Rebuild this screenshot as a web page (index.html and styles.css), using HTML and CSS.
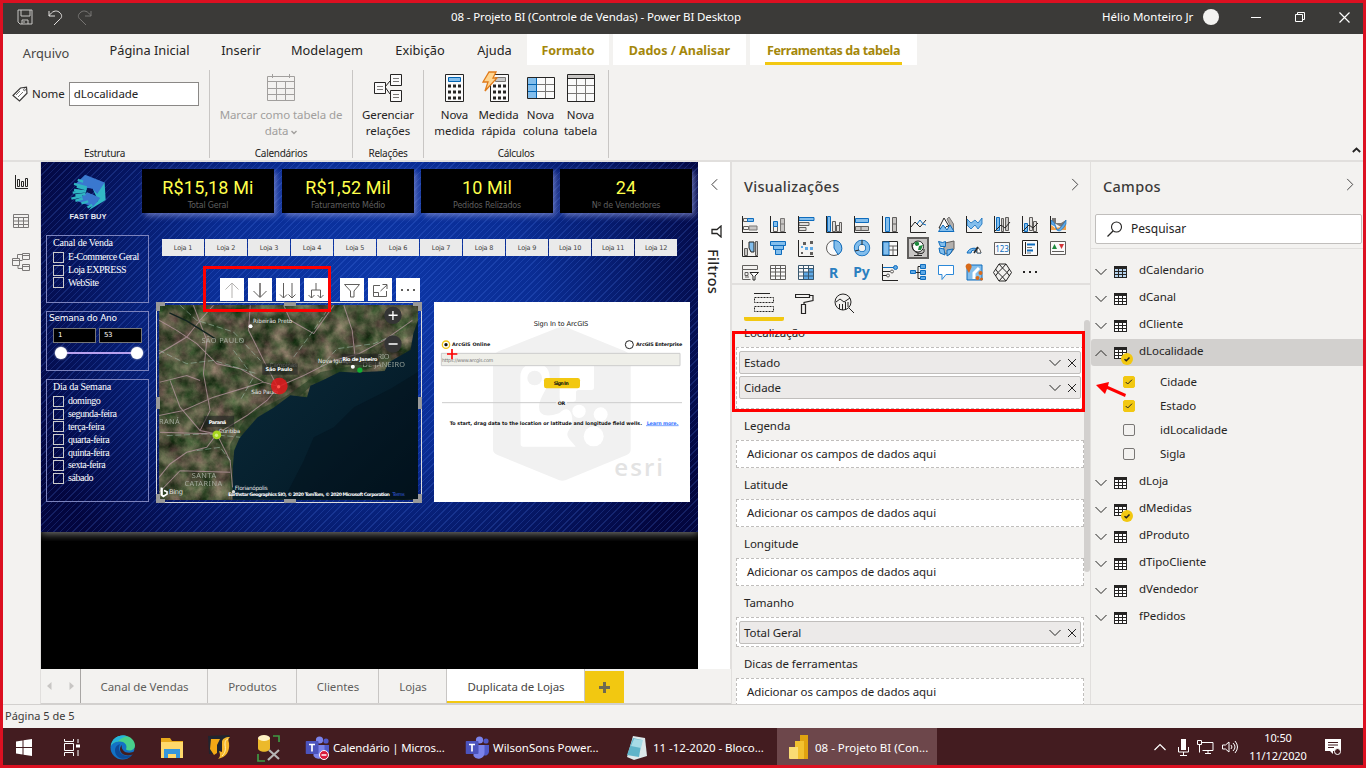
FILE: index.html
```html
<!DOCTYPE html>
<html lang="pt-BR">
<head>
<meta charset="utf-8">
<title>08 - Projeto BI (Controle de Vendas) - Power BI Desktop</title>
<link rel="stylesheet" href="styles.css">
</head>
<body>
<svg class="defs" aria-hidden="true">
  <symbol id="down" viewBox="0 0 12 8"><path d="M.5 1 6 6.500 11.500 1" fill="none" stroke="currentColor"/></symbol>
  <symbol id="close" viewBox="0 0 10 10"><path d="M1 1l8 8M9 1 1 9" fill="none" stroke="currentColor"/></symbol>
  <symbol id="right" viewBox="0 0 8 14"><path d="M1 1l6 6-6 6" fill="none" stroke="currentColor"/></symbol>
  <symbol id="tbl" viewBox="0 0 13 12"><path d="M0 0h13v12H0z" fill="#252423"/><path class="cells" d="M1 3h3v2H1zm4 0h3v2H5zm4 0h3v2H9zM1 6h3v2H1zm4 0h3v2H5zm4 0h3v2H9zM1 9h3v2H1zm4 0h3v2H5zm4 0h3v2H9z" fill="currentColor"/></symbol>
  <symbol id="tick" viewBox="0 0 12 12"><circle cx="6" cy="6" r="6" fill="#f2c811"/><path d="M3.500 6.200l1.800 1.600 3.200-3.400" fill="none" stroke="#252423" stroke-width="1.500"/></symbol>
  <symbol id="teams" viewBox="0 0 24 24"><circle cx="14" cy="4" r="3.600" fill="#7b83eb"/><circle cx="20.500" cy="5" r="2.600" fill="#5059c9"/><path d="M16 9h7.500v7a4 4 0 0 1-6 3z" fill="#5059c9"/><path d="M8 9h11v8a6 6 0 0 1-11 3z" fill="#7b83eb"/><rect y="5" width="13" height="13" rx="1" fill="#4b53bc"/><path d="M3.500 8.500h6M6.500 8.500v7" stroke="#fff" stroke-width="1.700"/></symbol>
</svg>
<div class="app">
  <header class="titlebar">
    <div class="quick">
      <svg width="17" height="16" viewBox="0 0 17 16"><path d="M1 1h14v14H3l-2-2zM4 1v6h9V1M5 15v-4h6v4M7 12v2" fill="none" stroke="#c8c6c4"/></svg>
      <svg width="15" height="15" viewBox="0 0 15 15"><path d="M1 1v5h6M1 6C4 1 8 0 11 2c4 3 3 6 0 8l-5 5" fill="none" stroke="#e1dfdd"/></svg>
      <svg width="15" height="15" viewBox="0 0 15 15"><path d="M14 1v5H8M14 6C11 1 7 0 4 2 0 5 1 8 4 10l5 5" fill="none" stroke="#777573"/></svg>
    </div>
    <div class="title">08 - Projeto BI (Controle de Vendas) - Power BI Desktop</div>
    <div class="user">Hélio Monteiro Jr</div><i class="avatar"></i>
    <div class="wbtns">
      <svg width="10" height="10" viewBox="0 0 10 10"><path d="M0 5.500h10" stroke="#fff"/></svg>
      <svg width="10" height="10" viewBox="0 0 10 10"><path d="M.5 2.500h7v7h-7zM2.500 2V.5h7v7H8" fill="none" stroke="#fff"/></svg>
      <svg width="11" height="11" viewBox="0 0 11 11"><path d="M.5.5l10 10M10.500.5l-10 10" stroke="#fff" stroke-width="1.200"/></svg>
    </div>
  </header>

  <nav class="tabs">
    <span class="tab file">Arquivo</span><span class="tab t2">Página Inicial</span><span class="tab t3">Inserir</span><span class="tab t4">Modelagem</span><span class="tab t5">Exibição</span><span class="tab t6">Ajuda</span>
    <span class="ctx c1">Formato</span><span class="ctx c2">Dados / Analisar</span><span class="ctx c3"><b>Ferramentas da tabela</b></span>
  </nav>

  <section class="ribbon">
    <div class="group g1">
      <div class="namerow">
        <svg width="16" height="17" viewBox="0 0 16 17"><path d="M1 9.500 8.500 2l6-.8.5 6L7.500 15z" fill="#fff" stroke="#3b3a39" stroke-width="1.200"/><path d="M4 9l4-4M6 11l5-5" stroke="#797775"/><circle cx="12.500" cy="3.700" r="1" fill="none" stroke="#3b3a39" stroke-width=".7"/></svg>
        <span>Nome</span><span class="nameinput">dLocalidade</span>
      </div>
      <div class="glabel">Estrutura</div>
    </div>
    <div class="group g2">
      <div class="btn off">
        <svg width="28" height="29" viewBox="0 0 28 29"><path d="M.5 3.500h27v24H.5zM.5 8.500h27M.5 15.500h27M.5 21.500h27M9.500 8.500v19M18.500 8.500v19M5.500 1v4M22.500 1v4" fill="none" stroke="#a19f9d"/></svg>
        <span>Marcar como tabela de<br>data <svg width="6" height="5" viewBox="0 0 6 5"><path d="M.5 1 3 3.500 5.500 1" fill="none" stroke="#a19f9d" stroke-width="1.400"/></svg></span>
      </div>
      <div class="glabel">Calendários</div>
    </div>
    <div class="group g3">
      <div class="btn">
        <svg width="30" height="29" viewBox="0 0 30 29"><path d="M12 14l5-6M12 14l5 7" stroke="#252423"/><path d="M1.500 9.500h11v11h-11zM17.500 1.500h11v11h-11zM17.500 17.500h11v11h-11z" fill="#fafafa" stroke="#252423"/><path d="M4 13.500h6M4 16.500h6M20 5.500h6M20 8.500h6M20 21.500h6M20 24.500h6" stroke="#797775"/></svg>
        <span>Gerenciar<br>relações</span>
      </div>
      <div class="glabel">Relações</div>
    </div>
    <div class="group g4">
      <div class="btns">
        <div class="btn b1"><svg width="19" height="29" viewBox="0 0 19 29"><path d="M.5 1.500h18v27H.5z" fill="#fafafa" stroke="#252423"/><path d="M3.500 4.500h12v4h-12z" fill="#83beec" stroke="#0063b1"/><path d="M3 13h13M3 19h13M3 25h13" stroke="#252423" stroke-width="3" stroke-dasharray="3 2"/></svg><span>Nova<br>medida</span></div>
        <div class="btn b2"><svg width="27" height="31" viewBox="0 0 27 31"><path d="M8.500 3.500h18v27h-18z" fill="#fafafa" stroke="#252423"/><path d="M13.500 6.500h10v4h-10z" fill="#c8c8c8" stroke="#797775"/><path d="M11 15h13M11 21h13M11 27h13" stroke="#252423" stroke-width="3" stroke-dasharray="3 2"/><path d="M7 1h7l-3 6h4L3 20l3-9H1z" fill="#ffd590" stroke="#e07b1a" stroke-width="1.300"/></svg><span>Medida<br>rápida</span></div>
        <div class="btn b3"><svg width="28" height="29" viewBox="0 0 28 29"><path d="M.5 4.500h27v21H.5z" fill="#fafafa"/><path d="M1 5h8v20H1z" fill="#83beec"/><path d="M9.500 11.500h18M9.500 18.500h18M18.500 5v20" stroke="#797775"/><path d="M1 11.500h8M1 18.500h8M9.500 5v20" stroke="#0063b1"/><path d="M.5 4.500h27v21H.5z" fill="none" stroke="#252423"/></svg><span>Nova<br>coluna</span></div>
        <div class="btn b4"><svg width="28" height="29" viewBox="0 0 28 29"><path d="M.5 1.500h27v27H.5z" fill="#fafafa"/><path d="M1 2h26v3.500H1z" fill="#c8c6c4"/><path d="M1 12.500h26M1 20.500h26M9.500 6v22M18.500 6v22" stroke="#797775"/><path d="M.5 1.500h27v27H.5zM.5 5.500h27" fill="none" stroke="#252423"/></svg><span>Nova<br>tabela</span></div>
      </div>
      <div class="glabel">Cálculos</div>
    </div>
    <svg class="collapse" width="9" height="6" viewBox="0 0 9 6"><path d="M.8 5 4.500 1.500 8.200 5" fill="none" stroke="#252423" stroke-width="1.800"/></svg>
  </section>

  <main class="main">
    <aside class="rail">
      <svg width="15" height="16" viewBox="0 0 15 16"><path d="M1.500 1v13.500H14M3.500 5.500h2v7h-2zM7.500 7.500h2v5h-2zM11.500 4.500h2v8h-2z" fill="none" stroke="#252423"/></svg>
      <svg width="16" height="16" viewBox="0 0 16 16"><path d="M.5 1.500h15v13H.5zM.5 4.500h15M.5 8h15M.5 11.500h15M5.500 4.500v10M10.500 4.500v10" fill="none" stroke="#7a7877"/></svg>
      <svg width="18" height="18" viewBox="0 0 18 18"><path d="M.5 5.500h7v7h-7zM.5 7.500h7M10.500.5h7v6h-7zM10.500 2.500h7M10.500 11.500h7v6h-7zM10.500 13.500h7M7.500 7.500h3M5.500 5.500v-4h5M6 12.500v3h4" fill="none" stroke="#7a7877"/></svg>
    </aside>

    <div class="work">
      <div class="workrow">
        <div class="stage">
          <div class="report">
            <svg class="logo" viewBox="210 40 110 115"><path d="M313 68l3 52-50 30 10-14 18-14-16-34z" fill="#32b8c6"/><path d="M255 45l58 23-22 34-14-16-40-4-12-8z" fill="#3a78cf"/><path d="M262 96l38 18-22 26-50-18z" fill="#3a78cf"/><path d="M262 84l16 4-4 14-14-6z" fill="#0a1150"/><path d="M233 60l16 5M222 72l38 10M230 80l30 8M222 90l34 4M218 98l40-4M226 106l30-4M214 116l32-8M226 122l22-6M244 130l20-6M262 142l14-8" stroke="#2fb4c2" stroke-width="7"/></svg>
            <div class="brand">FAST BUY</div>
            <div class="card k1"><b>R$15,18 Mi</b><span>Total Geral</span></div>
            <div class="card k2"><b>R$1,52 Mil</b><span>Faturamento Médio</span></div>
            <div class="card k3"><b>10 Mil</b><span>Pedidos Relizados</span></div>
            <div class="card k4"><b>24</b><span>Nº de Vendedores</span></div>
            <div class="lojas"><span>Loja 1</span><span>Loja 2</span><span>Loja 3</span><span>Loja 4</span><span>Loja 5</span><span>Loja 6</span><span>Loja 7</span><span>Loja 8</span><span>Loja 9</span><span>Loja 10</span><span>Loja 11</span><span>Loja 12</span></div>
            <div class="slicer s1"><h4>Canal de Venda</h4><p>E-Commerce Geral</p><p>Loja EXPRESS</p><p>WebSite</p></div>
            <div class="slicer s2"><h4>Semana do Ano</h4><div class="nums"><span>1</span><span>53</span></div><div class="track"><i></i><i></i></div></div>
            <div class="slicer s3"><h4>Dia da Semana</h4><p>domingo</p><p>segunda-feira</p><p>terça-feira</p><p>quarta-feira</p><p>quinta-feira</p><p>sexta-feira</p><p>sábado</p></div>

            <div class="vtools">
              <svg viewBox="0 0 24 23"><path d="M12 5v15M5.500 11.500 12 5l6.500 6.500" fill="none" stroke="#b5b3b1"/></svg>
              <svg viewBox="0 0 24 23"><path d="M12 5v14" stroke="#605e5c" stroke-width="1.500"/><path d="M5.500 13 12 19.500l6.500-6.500" fill="none" stroke="#605e5c"/></svg>
              <svg viewBox="0 0 24 23"><path d="M7.500 5v15M16 5v15M4 16.500 7.500 20l3.500-3.500M12.500 16.500 16 20l3.500-3.500" fill="none" stroke="#605e5c"/></svg>
              <svg viewBox="0 0 24 23"><path d="M12 5v7M7.500 20v-8h9v8M4.500 17l3 3 3-3M13.500 17l3 3 3-3" fill="none" stroke="#605e5c"/></svg>
              <svg class="gap" viewBox="0 0 24 23"><path d="M4.500 6.500h15L14 13v6h-3.500v-6z" fill="none" stroke="#605e5c"/></svg>
              <svg viewBox="0 0 24 23"><path d="M12 7.500H5.500v11h13V13M5.500 14.500h5v4M12.500 13l6.500-6M14.500 6.500h4.500V11" fill="none" stroke="#605e5c"/></svg>
              <svg viewBox="0 0 24 23"><path d="M5 11h2v2H5zm6 0h2v2h-2zm6 0h2v2h-2z" fill="#605e5c"/></svg>
            </div>

            <div class="mapbox">
              <svg class="map" viewBox="477 15 775 582">
                <defs>
                  <filter id="terrain" x="0" y="0" width="100%" height="100%" color-interpolation-filters="sRGB"><feTurbulence type="fractalNoise" baseFrequency=".022" numOctaves="5" seed="8"/><feColorMatrix values=".5 .45 0 0 -.17  .5 .15 0 0 0  .4 .3 0 0 -.12  0 0 0 0 1"/></filter>
                  <linearGradient id="sea" x1="0" y1="0" x2="1" y2="1"><stop offset="0" stop-color="#0b2b3a"/><stop offset=".55" stop-color="#06202e"/><stop offset="1" stop-color="#02141f"/></linearGradient>
                </defs>
                <rect x="477" y="15" width="775" height="582" fill="#46543a"/>
                <rect x="477" y="15" width="775" height="582" filter="url(#terrain)"/>
                <path d="M860 285 740 345 690 430 690 597 740 400 860 320 940 250 1120 200 1090 190 960 215z" fill="#1d3b1d" opacity=".55"/>
                <path d="M1252 60 1238 100 1230 148 1166 185 1152 212 1060 216 1018 214 970 238 930 256 920 290 870 284 820 322 772 350 718 412 702 450 698 500 697 597 1252 597z" fill="url(#sea)"/>
                <path d="M1252 215 1170 265 1060 320 1000 380 940 410 910 480 850 597H1252z" fill="#020f19" opacity=".4"/>
                <g fill="none" stroke="#b898a2" stroke-width="3" opacity=".75"><path d="M477 60 530 90 590 130 650 190 720 205 790 245 835 258 910 225 1000 180 1075 160 1150 120 1235 60M750 15 745 90 790 180 830 255M835 258 800 300 740 345 650 400 480 395M650 400 620 440 560 455 510 490 477 530M655 410 690 480 697 560M477 160 560 110 600 60 640 15M580 15 620 120 610 220 630 330 600 390 650 400M480 245 560 225 600 240M510 240 540 320 600 390M1030 15 1055 90 1065 180M477 345 550 330 640 290 790 245M850 15 870 60 940 100 1000 15M477 575 540 510 690 515"/></g>
                <g fill="none" stroke="#a9c9b8" stroke-width="2.500" stroke-dasharray="18 8" opacity=".6"><path d="M540 15 590 60 700 95 780 180M880 170 940 90 980 30M477 150 560 190 640 180 770 220M500 405 620 400 720 410M960 200 1010 145 1120 130 1190 100M590 450 660 440 690 480M700 150 760 230 720 300"/></g>
                <path d="M508 38 560 62 645 115" fill="none" stroke="#13231f" stroke-width="4"/>
                <g class="region"><text x="604" y="129" textLength="128">SÃO PAULO</text><text x="477" y="369" textLength="62">RANÁ</text><text x="575" y="532" textLength="73">SANTA</text><text x="553" y="557" textLength="113">CATARINA</text><text x="1131" y="175" textLength="36">RIO</text><text x="1086" y="199" textLength="127">DE JANEIRO</text></g>
                <g class="city"><text x="758" y="69" textLength="118">Ribeirão Preto</text><text x="808" y="201" textLength="82" opacity=".6">Campinas</text><text x="953" y="189" textLength="101">Nova Iguaçu</text><text x="753" y="281" textLength="80">São Paulo</text><text x="656" y="397" textLength="64">Curitiba</text><text x="704" y="567" textLength="98">Florianópolis</text></g>
                <circle cx="751" cy="78" r="6" fill="#fff"/><circle cx="1057" cy="199" r="6" fill="#fff"/><circle cx="700" cy="573" r="5" fill="#ddd"/>
                <path d="M786 189h106v34H786zM611 346h91v34h-91zM1024 160h112v34h-112z" fill="#222" opacity=".6"/>
                <g class="pin"><text x="796" y="212" textLength="80">São Paulo</text><text x="626" y="371" textLength="52">Paraná</text><text x="1025" y="182" textLength="106">Rio de Janeiro</text></g>
                <circle cx="837" cy="257" r="25" fill="#e3171c" opacity=".85"/><circle cx="835" cy="259" r="5" fill="#ff5a50"/><circle cx="650" cy="403" r="13" fill="#a6d51e"/><circle cx="649" cy="404" r="5" fill="#d4ef80"/><circle cx="1078" cy="209" r="8" fill="#10b132"/>
                <circle cx="1177" cy="45" r="26" fill="#353535"/><circle cx="1177" cy="131" r="26" fill="#353535"/><path d="M1164 45h27M1177 32v27M1164 131h27" stroke="#fff" stroke-width="4"/>
                <path d="M484 560v22l6 5 11-7v-7l-9-4M486 561v21" fill="none" stroke="#fff" stroke-width="5"/><text class="bing" x="507" y="580" textLength="42">Bing</text>
                <text class="credit" x="684" y="587" textLength="484">Earthstar Geographics SIO, © 2020 TomTom, © 2020 Microsoft Corporation</text><text class="terms" x="1176" y="587" textLength="36">Terms</text>
              </svg>
              <i class="h nw"></i><i class="h ne"></i><i class="h sw"></i><i class="h se"></i><i class="h n"></i><i class="h s"></i><i class="h w"></i><i class="h e"></i>
            </div>

            <div class="arcgis">
              <svg viewBox="27 21 768 600">
                <path d="M395 100q18-8 36 0l168 68q18 8 18 26v270q0 10-12 16l-175 72q-18 10-36 0l-176-72q-14-6-14-16V194q0-18 18-26z" fill="#f1f1f1"/>
                <path d="M286 245c0-55 88-55 88 0 0 30-32 62-32 90q0 40 60 20c40-40 50 30 30 50-15 20 8 32 20 50H295q-8 0-8-8z" fill="#fff"/>
                <path d="M404 212q0-7 7-7h89q7 0 7 7v66q0 7-7 7h-40q-7 0-7 8v20q0 7-7 7h-30q-12 0-12-12z" fill="#fff"/>
                <circle cx="329" cy="249" r="22" fill="#f1f1f1"/><circle cx="527" cy="358" r="21" fill="#fff"/><circle cx="506" cy="424" r="30" fill="#fff"/><circle cx="462" cy="349" r="20" fill="#fff"/>
                <text x="568" y="543" textLength="146" class="esri">esri</text>
                <text x="326" y="93" textLength="164" class="a1">Sign In to ArcGIS</text>
                <circle cx="63" cy="149" r="11" fill="#fff" stroke="#f0c419" stroke-width="4"/><circle cx="63" cy="149" r="5" fill="#111"/><text x="81" y="153" textLength="115">ArcGIS Online</text>
                <circle cx="613" cy="149" r="12" fill="#fff" stroke="#222" stroke-width="3"/><text x="633" y="153" textLength="139">ArcGIS Enterprise</text>
                <path d="M49 175h716v37H49z" fill="#efefe9" stroke="#ccc" stroke-width="3"/><text x="51" y="200" textLength="154" class="ph">https://www.arcgis.com</text>
                <path d="M66 177h31M81 162v31" stroke="#f00" stroke-width="5"/>
                <rect x="357" y="249" width="108" height="31" rx="7" fill="#f2c811"/><text x="386" y="270" textLength="45">Sign In</text>
                <path d="M51 323h343M426 323h345" stroke="#ccc" stroke-width="3"/><text x="398" y="329" textLength="23">OR</text>
                <text x="74" y="389" textLength="577">To start, drag data to the location or latitude and longitude field wells.</text><text x="665" y="389" textLength="95" class="lm">Learn more.</text><path d="M663 392h98" stroke="#3b78ff" stroke-width="2"/>
              </svg>
            </div>
            <i class="mark m1"></i>
          </div>
        </div>
        <div class="filters">
          <svg class="fl" width="7" height="13" viewBox="0 0 8 14"><path d="M7 1 1 7l6 6" fill="none" stroke="#252423"/></svg>
          <svg class="fn" width="11" height="13" viewBox="0 0 11 13"><path d="M10 1v11L6 8.500H1v-4h5z" fill="none" stroke="#252423" stroke-width="1.300"/></svg>
          <span>Filtros</span>
        </div>
      </div>
      <div class="pages">
        <div class="arrows"><svg width="5" height="8" viewBox="0 0 5 8"><path d="M4.500 0v8L0 4z" fill="#c8c6c4"/></svg><svg width="5" height="8" viewBox="0 0 5 8"><path d="M.5 0v8L5 4z" fill="#c8c6c4"/></svg></div>
        <span class="p1">Canal de Vendas</span><span class="p2">Produtos</span><span class="p3">Clientes</span><span class="p4">Lojas</span><span class="p5 on">Duplicata de Lojas</span>
        <i class="plus"><svg width="11" height="11" viewBox="0 0 11 11"><path d="M5.500 0v11M0 5.500h11" stroke="#6f6a50" stroke-width="3"/></svg></i>
      </div>
    </div>

    <section class="viz">
      <div class="phead"><h2>Visualizações</h2><svg width="8" height="13"><use href="#right"/></svg></div>
      <div class="vgrid">
        <svg viewBox="0 0 17 17"><path d="M1.500 2.500h5v3h-5z" fill="none" stroke="#605e5c"/><path d="M5.500 2.500h6v3h-6z" fill="#83beec" stroke="#0e6cbd"/><path d="M1.500 10.500h5v3h-5z" fill="none" stroke="#605e5c"/><path d="M7 10h8v4H7z" fill="#c8c6c4" stroke="#797775"/><path d="M.5 0v16.500H16" fill="none" stroke="#252423"/></svg>
        <svg viewBox="0 0 17 17"><path d="M3.500 9.500h4v6h-4z" fill="none" stroke="#605e5c"/><path d="M3.500 5.500h4v5h-4z" fill="#83beec" stroke="#0e6cbd"/><path d="M10.500 2.500h4v13h-4zM10.500 8h4" fill="#c8c6c4" stroke="#797775"/><path d="M.5 0v16.500H16" fill="none" stroke="#252423"/></svg>
        <svg viewBox="0 0 17 17"><path d="M1 1.500h15v3H1z" fill="#83beec" stroke="#0e6cbd"/><path d="M1 6.500h10v3H1zM1 11.500h7v3H1z" fill="#e1dfdd" stroke="#605e5c"/><path d="M.5 0v16.500H16" fill="none" stroke="#252423"/></svg>
        <svg viewBox="0 0 17 17"><path d="M1.500.5h3v15h-3z" fill="#83beec" stroke="#0e6cbd"/><path d="M6.500 5.500h3v10h-3zM10.500 9.500h3v6h-3zM13.500 6.500h2v9h-2z" fill="#e1dfdd" stroke="#605e5c"/><path d="M.5 0v16.500H16" fill="none" stroke="#252423"/></svg>
        <svg viewBox="0 0 17 17"><path d="M1.500 2.500h13v4h-13z" fill="#83beec" stroke="#0e6cbd"/><path d="M1.500 10.500h13v4h-13zM7 10v4" fill="#c8c6c4" stroke="#605e5c"/><path d="M.5 0v16.500H16" fill="none" stroke="#252423"/></svg>
        <svg viewBox="0 0 17 17"><path d="M3.500 1.500h4v14h-4z" fill="#83beec" stroke="#0e6cbd"/><path d="M10.500 1.500h4v14h-4zM10 8h4" fill="#c8c6c4" stroke="#605e5c"/><path d="M.5 0v16.500H16" fill="none" stroke="#252423"/></svg>
        <svg viewBox="0 0 17 17"><path d="M1 11 5 6l5 5 6-7" fill="none" stroke="#252423"/><path d="M7 8l3-4 3 4 3 1" fill="none" stroke="#0e6cbd"/><path d="M.5 0v16.500H16" fill="none" stroke="#252423"/></svg>
        <svg viewBox="0 0 17 17"><path d="M9 3l2-2 4.500 7v8z" fill="#b3b0ad" stroke="#797775"/><path d="M1 12 6 2l6 10-3-2-3 3z" fill="#fafafa" stroke="#252423"/><path d="M.5 15.500 5 9l4 5 3-5 4 6.500z" fill="#83beec" stroke="#0e6cbd"/></svg>
        <svg viewBox="0 0 17 17"><path d="M1 3l4 4 4-3 3 3 4-5v6l-4 5-3-4-4 4-4-4z" fill="#83beec" stroke="#0e6cbd" stroke-width=".8"/><path d="M.5 0v16.500H16" fill="none" stroke="#252423"/></svg>
        <svg viewBox="0 0 17 17"><path d="M2.500 1.500h3v13h-3z" fill="#83beec" stroke="#0e6cbd"/><path d="M7.500 2.500h2v13h-2zM11.500 1.500h3v13h-3z" fill="#c8c6c4" stroke="#605e5c"/><path d="M1 15 7 9l4 3 5-6M.5 0v16.500H16" fill="none" stroke="#252423"/></svg>
        <svg viewBox="0 0 17 17"><path d="M2.500 7.500h3v8h-3z" fill="#83beec" stroke="#0e6cbd"/><path d="M7.500 1.500h3v13h-3zM11.500 5.500h3v10h-3z" fill="#e1dfdd" stroke="#605e5c"/><path d="M1 15 7 9l4 3 5-5M.5 0v16.500H16" fill="none" stroke="#252423"/></svg>
        <svg viewBox="0 0 17 17"><path d="M2 2h4v5h5l5-3v5l-5 2-5-3-4-1z" fill="#797775"/><path d="M1 9l4 3 6-1 5-5v8H1z" fill="#f0a04a"/><path d="M1 4q4 2 5 7t5 0 5-7v4q-4 7-7 7T5 10L1 8z" fill="#5ea9e6" stroke="#0e6cbd" stroke-width=".6"/><path d="M.5 0v16.500H16" fill="none" stroke="#252423"/></svg>

        <svg viewBox="0 0 17 17"><path d="M2.500 8.500h3v7h-3zM13.500 1.500h2v14h-2z" fill="#c8c6c4" stroke="#605e5c"/><path d="M7 8V2h5v10H9z" fill="#83beec" stroke="#252423"/><path d="M.5 0v16.500H16" fill="none" stroke="#252423"/></svg>
        <svg viewBox="0 0 17 17"><path d="M.5 1.500h15v4H.5zM3.500 5.500h10v4h-10zM5.500 9.500h6v5h-6z" fill="#83beec" stroke="#0e6cbd"/></svg>
        <svg viewBox="0 0 17 17"><path d="M5 2h3v3H5zM12 1h3v3h-3zM12 12h3v3h-3zM3 12h2v2H3z" fill="#605e5c"/><path d="M3 6h2v2H3zM7 7h3v3H7zM12 7h3v3h-3z" fill="#5ea9e6"/><path d="M.5 0v16.500H16" fill="none" stroke="#252423"/></svg>
        <svg viewBox="0 0 17 17"><circle cx="8" cy="8" r="7.500" fill="#fafafa" stroke="#605e5c"/><path d="M8 .5A7.500 7.500 0 0 1 12 14.500L8 8z" fill="#83beec" stroke="#0e6cbd"/></svg>
        <svg viewBox="0 0 17 17"><circle cx="8" cy="8" r="5.700" fill="none" stroke="#0e6cbd" stroke-width="5"/><circle cx="8" cy="8" r="5.700" fill="none" stroke="#83beec" stroke-width="3.400"/><path d="M8 0v5M1 11l4-1" stroke="#252423"/></svg>
        <svg viewBox="0 0 17 17"><path d="M.5 1.500h15v14H.5z" fill="#fafafa" stroke="#252423"/><path d="M1 2h6v13H1z" fill="#83beec" stroke="#0e6cbd"/><path d="M7 6h8M7 10h8M11 6v9" stroke="#605e5c"/></svg>
        <svg class="sel" viewBox="0 0 22 22"><path d="M1 1h20v20H1z" fill="#c8c6c4" stroke="#605e5c" stroke-width="2"/><circle cx="11" cy="9.500" r="5.500" fill="#fff" stroke="#252423"/><path d="M7 6q4-3 5 0t-3 3zM12 9l4-1-2 5-3 0z" fill="#1d8a3d"/><path d="M5 6q-1 8 6 10t6-4M11 16v3M7 18.500h8" fill="none" stroke="#252423"/></svg>
        <svg viewBox="0 0 17 17"><path d="M7 3l9-2v8l-5 6-6-3z" fill="#b3b0ad" stroke="#605e5c"/><path d="M.5 1.500l4 1 3-1v5h-5zM1 8l5 1 1 6-5-2zM9 10l6-1-3 5-3 2z" fill="#83beec" stroke="#0e6cbd"/></svg>
        <svg viewBox="0 0 17 17"><path d="M1 13a7.500 7.500 0 0 1 14 0l-4 0a3 3 0 0 0-6 0z" fill="#83beec" stroke="#0e6cbd"/><path d="M11 7a7 7 0 0 1 4 6l-4 0z" fill="#fff" stroke="#605e5c"/><path d="M8 13l4-6" stroke="#252423" stroke-width="1.500"/></svg>
        <svg viewBox="0 0 17 17"><path d="M.5 2.500h15v12H.5z" fill="#fafafa" stroke="#605e5c"/><text x="8" y="12" class="n123">123</text></svg>
        <svg viewBox="0 0 17 17"><path d="M.5.500h15v15H.5z" fill="#fafafa" stroke="#252423"/><path d="M3.500 2v12" stroke="#252423"/><path d="M5 4.500h8M5 10.500h6" stroke="#0e6cbd" stroke-width="2"/><path d="M5 7.500h5M5 13h4" stroke="#797775"/></svg>
        <svg viewBox="0 0 17 17"><path d="M.5 1.500h15v13H.5z" fill="#fafafa" stroke="#605e5c"/><path d="M2 9l2.500-5L7 9z" fill="#1d8a3d"/><path d="M9 4h5l-2.500 5z" fill="#d13438"/><path d="M2 11.500h12" stroke="#605e5c"/></svg>

        <svg viewBox="0 0 17 17"><path d="M.5 1.500h15v4H.5zM.5 5.500v10h8M3 8.500h3v3H3zM3 13h4" fill="none" stroke="#605e5c"/><path d="M8 8.500h8.500L13 12v4h-2v-4z" fill="#fff" stroke="#252423"/></svg>
        <svg viewBox="0 0 17 17"><path d="M.5 1.500h15v14H.5zM.5 4.500h15M.5 8h15M.5 12h15M5.500 1.500v14M10.500 1.500v14" fill="#fafafa" stroke="#605e5c"/></svg>
        <svg viewBox="0 0 17 17"><path d="M.5 1.500h15v14H.5z" fill="#fafafa"/><path d="M5.500 8H16v8H5.500zM10.500 5H16v4h-5.500z" fill="#5ea9e6"/><path d="M.5 1.500h15v14H.5zM.5 4.500h15M.5 8h15M.5 12h15M5.500 1.500v14M10.500 1.500v14" fill="none" stroke="#39576e"/></svg>
        <svg viewBox="0 0 17 17"><text x="7.500" y="13.500" class="rpy">R</text></svg>
        <svg viewBox="0 0 17 17"><text x="7.500" y="12.500" class="rpy">Py</text></svg>
        <svg viewBox="0 0 17 17"><path d="M1 3.500h11" stroke="#0e6cbd"/><circle cx="13.500" cy="3.500" r="2" fill="#5ea9e6" stroke="#0e6cbd"/><path d="M1 7.500h7M1 11.500h4" stroke="#252423"/><circle cx="10" cy="7.500" r="1.500" fill="none" stroke="#605e5c"/><circle cx="6" cy="11.500" r="1.500" fill="none" stroke="#605e5c"/><path d="M.5 0v16.500H16" fill="none" stroke="#252423"/></svg>
        <svg viewBox="0 0 17 17"><path d="M5 8.500h3M8 2.500v12M8 2.500h3M8 8.500h3M8 14.500h3" fill="none" stroke="#252423"/><path d="M.5 6.500h5v3h-5zM10.500.5h5v4h-5zM10.500 6.500h5v4h-5zM10.500 12.500h5v3h-5z" fill="#5ea9e6" stroke="#0e6cbd"/></svg>
        <svg viewBox="0 0 17 17"><path d="M.5 1.500h15v9H8l-4 5v-5H.5z" fill="#fff" stroke="#2b88d8"/></svg>
        <svg viewBox="0 0 17 17"><path d="M1 1h15v15H1z" fill="#83beec" stroke="#0e6cbd"/><path d="M8 15V9l5-5" fill="none" stroke="#fff" stroke-width="3"/><path d="M2.500-.500a3 3 0 0 1 3 4L3 9 0 4a3 3 0 0 1 2.500-4.500z" fill="#d86a1a"/><circle cx="14.500" cy="9" r="2" fill="#d86a1a"/><circle cx="11.500" cy="14" r="2" fill="#d86a1a"/><circle cx="15.500" cy="15" r="1.500" fill="#d86a1a"/></svg>
        <svg class="dia" viewBox="0 0 19 19"><path d="M6 1h7l5.500 8.500L13 18H6L.5 9.500zM6 1l3.500 4L13 1M6 18l3.500-4 3.500 4M9.500 5 14 9.500 9.500 14 5 9.500zM5 9.500 2.500 6M14 9.500 16.500 6M5 9.500 2.500 13M14 9.500l2.500 3.500" fill="none" stroke="#252423"/></svg>
        <svg viewBox="0 0 17 17"><path d="M1 7h2v2H1zm6 0h2v2H7zm6 0h2v2h-2z" fill="#252423"/></svg>
      </div>
      <div class="vtabs">
        <div class="on"><svg width="20" height="20" viewBox="0 0 20 20"><path d="M0 .5h16" stroke="#252423"/><path d="M.5 4.500h19v5H.5zM.5 13.500h19v5H.5z" fill="none" stroke="#252423" stroke-dasharray="2 1"/></svg></div>
        <div><svg width="19" height="21" viewBox="0 0 19 21"><path d="M.5 1.500h14v3H.5zM14.500 2.500h3.500v5l-9 2v2M6.500 11.500h4v9h-4z" fill="none" stroke="#252423" stroke-width="1.200"/></svg></div>
        <div><svg width="21" height="21" viewBox="0 0 21 21"><circle cx="9" cy="9" r="8" fill="none" stroke="#252423"/><path d="M15 15l5 5M2 9l4-3 4 3 6-4M5.500 16V11M8.500 17v-6M11.500 16V9M14 14V9" fill="none" stroke="#252423"/></svg></div>
      </div>
      <div class="wells">
        <div class="wlabel">Localização</div>
        <div class="well two"><div class="chip">Estado<svg width="12" height="8"><use href="#down"/></svg><svg width="10" height="10"><use href="#close"/></svg></div><div class="chip">Cidade<svg width="12" height="8"><use href="#down"/></svg><svg width="10" height="10"><use href="#close"/></svg></div></div>
        <div class="wlabel">Legenda</div><div class="well">Adicionar os campos de dados aqui</div>
        <div class="wlabel">Latitude</div><div class="well">Adicionar os campos de dados aqui</div>
        <div class="wlabel">Longitude</div><div class="well">Adicionar os campos de dados aqui</div>
        <div class="wlabel">Tamanho</div>
        <div class="well one"><div class="chip">Total Geral<svg width="12" height="8"><use href="#down"/></svg><svg width="10" height="10"><use href="#close"/></svg></div></div>
        <div class="wlabel">Dicas de ferramentas</div><div class="well">Adicionar os campos de dados aqui</div>
      </div>
      <i class="thumb"></i><i class="mark m2"></i>
    </section>

    <section class="fields">
      <div class="phead"><h2>Campos</h2><svg width="8" height="13"><use href="#right"/></svg></div>
      <div class="search"><svg width="16" height="16" viewBox="0 0 16 16"><circle cx="9.500" cy="6" r="5" fill="none" stroke="#252423" stroke-width="1.100"/><path d="M6 10 .5 15.500" stroke="#252423" stroke-width="1.200"/></svg>Pesquisar</div>
      <div class="tree">
        <div class="row blue"><svg class="ch"><use href="#down"/></svg><svg class="tb"><use href="#tbl"/></svg><span>dCalendario</span></div>
        <div class="row"><svg class="ch"><use href="#down"/></svg><svg class="tb"><use href="#tbl"/></svg><span>dCanal</span></div>
        <div class="row"><svg class="ch"><use href="#down"/></svg><svg class="tb"><use href="#tbl"/></svg><span>dCliente</span></div>
        <div class="row on"><svg class="ch up"><use href="#down"/></svg><svg class="tb"><use href="#tbl"/></svg><svg class="badge"><use href="#tick"/></svg><span>dLocalidade</span></div>
        <div class="subs">
          <div class="sub"><i class="ck on"><svg width="8" height="6" viewBox="0 0 8 6"><path d="M.7 3l2 2L7 .7" fill="none" stroke="#252423"/></svg></i>Cidade</div>
          <div class="sub"><i class="ck on"><svg width="8" height="6" viewBox="0 0 8 6"><path d="M.7 3l2 2L7 .7" fill="none" stroke="#252423"/></svg></i>Estado</div>
          <div class="sub"><i class="ck"></i>idLocalidade</div>
          <div class="sub"><i class="ck"></i>Sigla</div>
        </div>
        <div class="row"><svg class="ch"><use href="#down"/></svg><svg class="tb"><use href="#tbl"/></svg><span>dLoja</span></div>
        <div class="row"><svg class="ch"><use href="#down"/></svg><svg class="tb"><use href="#tbl"/></svg><svg class="badge"><use href="#tick"/></svg><span>dMedidas</span></div>
        <div class="row"><svg class="ch"><use href="#down"/></svg><svg class="tb"><use href="#tbl"/></svg><span>dProduto</span></div>
        <div class="row"><svg class="ch"><use href="#down"/></svg><svg class="tb"><use href="#tbl"/></svg><span>dTipoCliente</span></div>
        <div class="row"><svg class="ch"><use href="#down"/></svg><svg class="tb"><use href="#tbl"/></svg><span>dVendedor</span></div>
        <div class="row"><svg class="ch"><use href="#down"/></svg><svg class="tb"><use href="#tbl"/></svg><span>fPedidos</span></div>
      </div>
      <svg class="arrow" width="33" height="18" viewBox="0 0 33 18"><path d="M1 4 14 1l-1 4 18 8-1 3-18-8-2 5z" fill="#f00"/></svg>
    </section>
  </main>

  <footer class="status">Página 5 de 5</footer>

  <div class="taskbar">
    <div class="ic i1"><svg width="16" height="17" viewBox="0 0 16 17"><path d="M0 2.500l6.500-1V8H0zM7.500 1.300 16 0v8H7.500zM0 9h6.500v6.500L0 14.500zM7.500 9H16v8l-8.500-1.300z" fill="#fff"/></svg></div>
    <div class="ic i2"><svg width="16" height="17" viewBox="0 0 16 17"><path d="M.5 0v2.500h9V0M.5 4.500h9v7h-9zM.5 17v-3.500h9V17M14 0v4M14 11v6" fill="none" stroke="#fff"/><path d="M12 5.500h4v3h-4z" fill="#fff"/></svg></div>
    <div class="ic i3"><svg width="25" height="25" viewBox="0 0 25 25"><circle cx="12.500" cy="12.500" r="12" fill="#1372c5"/><path d="M1 11C2 4 7 .5 13 .5c8 0 12 6 12 10 0 5-6 6-9 4 2-5-2-8-6-8-5 0-8 2-9 4.500z" fill="#48cf8b"/><path d="M1 11C2 4 7 .5 13 .5c2 0 3 .3 5 1-4 0-8 2-10 5-4 0-6 2-7 4.500z" fill="#25b4dc"/><path d="M10 9c-3 6 1 12 8 12 2 0 4-1 5-2-4 7-18 7-18-4 0-3 2-5 5-6z" fill="#0d4a98"/><path d="M12 10c-1 2 0 5 3 7 3 1 7 1 10-1l-1 3c-6 3-14 1-14-5 0-2 1-3 2-4z" fill="#431c20"/></svg></div>
    <div class="ic i4"><svg width="22" height="22" viewBox="0 0 22 22"><path d="M0 1h9l2 3h11v17H0z" fill="#e9a91b"/><path d="M0 5h22v16H0z" fill="#ffd86b"/><path d="M3 21v-9h16v9h-4v-4H7v4z" fill="#3596dc"/></svg></div>
    <div class="ic i5"><svg width="24" height="26" viewBox="0 0 24 26"><path d="M0 1l22-1-3 10-8 8-10 1z" fill="#20252f"/><path d="M3 4h9l-3 6v8l-3 2-4-6z" fill="#f4a915"/><path d="M10 24c3-3 2-5 1-8l3 1V7c0-3 3-5 8-5-2 2-2 3-1 6 1 9-3 14-11 16z" fill="#f6b72b"/><path d="M20 4c-3 1-3 3-3 6 1 5 0 8-3 11" fill="none" stroke="#fff2b0"/></svg></div>
    <div class="ic i6"><svg width="25" height="28" viewBox="0 0 25 28"><path d="M1 4v10c0 5 12 5 12 0V4z" fill="#ecb92b"/><ellipse cx="7" cy="4" rx="6" ry="3" fill="#fff2c4"/><path d="M16 2h6v6M1 20v7h7" fill="none" stroke="#3f9a43" stroke-width="1.700"/><path d="M12 16l10 9M22 16 11 26" stroke="#b6b6b6" stroke-width="2.200"/></svg></div>
    <div class="tk k5"><svg width="25" height="24" viewBox="0 0 24 24"><use href="#teams"/><circle cx="18.500" cy="19" r="4.500" fill="#d91b3c" stroke="#fff"/><path d="M16 19h5" stroke="#fff" stroke-width="1.500"/></svg>Calendário | Micros...</div>
    <div class="tk k6"><svg width="25" height="24" viewBox="0 0 24 24"><use href="#teams"/></svg>WilsonSons Power...</div>
    <div class="tk k7"><svg width="22" height="24" viewBox="0 0 22 24"><path d="M7 0l12 2 2 18-13 4-7-3z" fill="#dce8ea"/><path d="M7 2l9 2-3 17L1 19z" fill="#5fb4c9"/><path d="M8 3l9 1-2 8-10-2z" fill="#a6dbe6"/></svg>11 -12-2020 - Bloco...</div>
    <div class="tk k8"><svg width="20" height="25" viewBox="0 0 20 25"><path d="M11 0h8v24h-8z" fill="#e0a310"/><path d="M6 6h9v18H6z" fill="#f2c12f"/><path d="M0 12h9v12H1q-1 0-1-1z" fill="#f9dc74"/></svg>08 - Projeto BI (Con...</div>
    <div class="tray">
      <svg width="12" height="8" viewBox="0 0 12 8"><path d="M.5 7 6 1.500 11.500 7" fill="none" stroke="#fff" stroke-width="1.200"/></svg>
      <svg class="mic" width="11" height="17" viewBox="0 0 11 17"><path d="M3 0h5v11H3z" fill="#fff"/><path d="M.5 8v5h10V8M5.500 13v3M2 16.500h7" fill="none" stroke="#fff"/></svg>
      <svg width="17" height="15" viewBox="0 0 17 15"><path d="M4 2.500h12v8H5.500M.5.500h4v4h-4zM2.500 4.500v8M8 13.500h6M11 10v3" fill="none" stroke="#fff"/></svg>
      <svg width="17" height="14" viewBox="0 0 17 14"><path d="M.5 5h3L7 2v10L3.500 9h-3zM9 5q2 2 0 4M11 3q4 4 0 8M13 1q5 6 0 12" fill="none" stroke="#fff"/></svg>
      <div class="clock">10:50<br>11/12/2020</div>
      <svg width="17" height="18" viewBox="0 0 17 18"><path d="M0 1h16v12H8v3l-3-3H0z" fill="#fff"/><path d="M3 4.500h10M3 7h10M3 9.500h6" stroke="#431c20"/><circle cx="12.500" cy="13.500" r="3" fill="#431c20" stroke="#fff"/></svg>
    </div>
  </div>
</div>
</body>
</html>
```
FILE: styles.css
```css
* { box-sizing: border-box; }
body { margin: 0; width: 1366px; height: 768px; overflow: hidden; background: #dc1021; color: #252423; font: 11.5px/16px "Noto Sans", "Open Sans", sans-serif; }
svg { display: block; flex: none; }
h2, h4, p { margin: 0; font-weight: 400; }
.defs { position: absolute; width: 0; height: 0; }
.app { width: 1366px; height: 768px; border: 3px solid #dc1021; display: flex; flex-direction: column; background: #f3f2f0; }

.titlebar { height: 31px; flex: none; background: #3b3a38; color: #fff; display: flex; align-items: center; padding-bottom: 3px; white-space: nowrap; }
.quick { display: flex; align-items: center; gap: 14px; width: 448px; padding-left: 14px; }
.title { width: 651px; letter-spacing: -.13px; }
.user { width: 101px; letter-spacing: 0; }
.avatar { width: 16px; height: 16px; border-radius: 50%; background: #f3f2f0; }
.wbtns { display: flex; align-items: center; gap: 34px; margin-left: 32px; }

.tabs { height: 36px; flex: none; display: flex; align-items: flex-start; font-size: 12.800px; white-space: nowrap; }
.tab { flex: none; height: 33px; line-height: 33px; text-align: center; }
.file { width: 86px; padding-top: 3px; color: #484644; }
.t2 { width: 121px; } .t3 { width: 62px; } .t4 { width: 110px; } .t5 { width: 76px; } .t6 { width: 69px; padding-left: 4px; }
.ctx { height: 31px; line-height: 33px; background: #fff; color: #a4870b; font-weight: 600; font-size: 12.500px; margin-right: 4px; display: flex; justify-content: center; }
.c1 { width: 82px; } .c2 { width: 133px; } .c3 { width: 167px; letter-spacing: -.18px; }
.ctx, .c3 b { font-weight: 700; }
.c3 b { height: 31px; width: 137px; display: flex; justify-content: center; border-bottom: 3px solid #f2c811; letter-spacing: -.38px; }

.ribbon { height: 92px; flex: none; display: flex; border-bottom: 2px solid #e1dfdd; position: relative; }
.group { height: 88px; border-right: 1px solid #c8c6c4; display: flex; flex-direction: column; justify-content: space-between; align-items: center; }
.g1 { width: 207px; } .g2 { width: 143px; } .g3 { width: 71px; } .g4 { width: 185px; }
.glabel { font-size: 10px; line-height: 10px; letter-spacing: -.3px; }
.g1 .glabel { margin-left: -3px; }
.namerow { display: flex; align-items: center; width: 100%; padding: 12px 0 0 9px; gap: 4px; letter-spacing: -.05px; }
.nameinput { width: 130px; height: 24px; border: 1px solid #8a8886; background: #fff; line-height: 22px; padding-left: 4px; }
.btn { display: flex; flex-direction: column; align-items: center; text-align: center; padding-top: 3px; gap: 5px; letter-spacing: -.08px; }
.btn span { white-space: nowrap; }
.btn span svg { display: inline-block; }
.off { color: #a19f9d; }
.btns { display: flex; width: 100%; padding-left: 9px; }
.b1 { width: 43px; } .b2 { width: 45px; } .b3 { width: 39px; } .b4 { width: 41px; }
.b2 { padding-top: 1px; }
.b2 svg { margin-right: 6px; }
.collapse { position: absolute; right: 2px; bottom: 7px; }

.main { height: 542px; flex: none; display: flex; }
.rail { width: 38px; display: flex; flex-direction: column; align-items: center; padding: 12px 1px 0 0; gap: 24px; border-right: 1px solid #e1dfdd; }
.rail svg:nth-child(2) { margin-top: -1px; }
.work { width: 690px; flex: none; display: flex; flex-direction: column; }
.workrow { height: 507px; display: flex; }
.stage { width: 657px; background: #000; }
.report { position: relative; width: 657px; height: 370px; box-shadow: 0 2px 8px #777; clip-path: inset(0 0 -9px 0);
  background: repeating-linear-gradient(135deg, #5c8cff30 0 1px, transparent 1px 4.500px), radial-gradient(ellipse 370px 340px at 330px 145px, #0d38aa, #0a2d94 45%, #051560 78%, #03063f); }
.report > * { position: absolute; }
.logo { left: 29px; top: 11px; width: 37px; height: 39px; }
.brand { left: 26px; top: 50px; width: 42px; text-align: center; color: #e8e8f0; font: 700 7.500px/10px "Liberation Sans", sans-serif; white-space: nowrap; }
.card { top: 7px; width: 132px; height: 44px; background: #000; text-align: center; display: flex; flex-direction: column; box-shadow: 3px 3px 6px #8f98d8aa; }
.card b { color: #ffff4b; font: 400 18px/23px Roboto, sans-serif; letter-spacing: .15px; padding-top: 7px; height: 30px; }
.card span { color: #5f5f5f; font: 8px/12px "DejaVu Sans", sans-serif; white-space: nowrap; letter-spacing: -.2px; padding-top: 1px; }
.k1 { left: 101px; } .k2 { left: 241px; } .k3 { left: 380px; } .k4 { left: 519px; }
.lojas { left: 121px; top: 77px; display: flex; gap: 1px; }
.lojas span { width: 42px; height: 17px; background: #eaeaea; color: #444; text-align: center; font: 6.500px/18px "DejaVu Sans", sans-serif; letter-spacing: -.2px; }
.slicer { left: 5px; width: 103px; border: 1px solid #7c83bd; color: #fff; font: 10px/12px "Liberation Serif", serif; padding-left: 6px; letter-spacing: -.45px; }
.slicer h4 { font-size: 10px; letter-spacing: -.2px; }
.s1 { top: 73px; height: 68px; } .s1 h4, .s3 h4 { padding-top: 1px; height: 15px; }
.s2 { top: 149px; height: 60px; padding-left: 2px; } .s2 h4 { font: 9px/12px "DejaVu Sans", sans-serif; letter-spacing: -.25px; height: 16px; }
.s3 { top: 217px; height: 123px; }
.slicer p { height: 12.800px; display: flex; align-items: center; white-space: nowrap; }
.slicer p::before { content: ""; width: 9px; height: 9px; border: 1px solid #ccc; margin-right: 4px; }
.nums { display: flex; gap: 3px; padding-left: 4px; }
.nums span { width: 43px; height: 15px; border: 1px solid #777; background: #000; padding-left: 4px; font: 7px/13px "DejaVu Sans", sans-serif; }
.track { margin: 9px 10px 0 12px; width: 76px; height: 2px; background: #b9a1ee; display: flex; justify-content: space-between; align-items: center; }
.track i { width: 12px; height: 12px; border-radius: 50%; background: #fff; flex: none; margin: 0 -6px; box-shadow: 0 0 2px #fff; }
.vtools { left: 179px; top: 116px; display: flex; gap: 4px; }
.vtools svg { width: 24px; height: 23px; background: #fff; }
.vtools .gap { margin-left: 8px; }
.mapbox { left: 115px; top: 140px; width: 266px; height: 201px; border: 1px solid #dcdcdc; padding: 2px; }
.map { width: 259px; height: 195px; }
.map text { font-family: "DejaVu Sans", sans-serif; }
.region text { font: 22px "Noto Sans", sans-serif !important; fill: #aeb6aa; opacity: .85; }
.city text { font-size: 17px; fill: #e6e6e6; }
.pin text { font-size: 15px; font-weight: 700; fill: #fff; }
.map .bing { font-size: 20px; fill: #ddd; }
.map .credit { font-size: 14px; font-weight: 700; fill: #fff; }
.map .terms { font-size: 14px; fill: #3e63e8; }
.h { position: absolute; background: #999; }
.nw, .ne, .sw, .se { width: 9px; height: 9px; }
.nw { left: -1px; top: -1px; clip-path: polygon(0 0, 100% 0, 100% 4px, 4px 4px, 4px 100%, 0 100%); }
.ne { right: -1px; top: -1px; clip-path: polygon(0 0, 100% 0, 100% 100%, 5px 100%, 5px 4px, 0 4px); }
.sw { left: -1px; bottom: -1px; clip-path: polygon(0 0, 4px 0, 4px 5px, 100% 5px, 100% 100%, 0 100%); }
.se { right: -1px; bottom: -1px; clip-path: polygon(5px 0, 100% 0, 100% 100%, 0 100%, 0 5px, 5px 5px); }
.n, .s { left: 127px; width: 12px; height: 4px; } .n { top: -1px; } .s { bottom: -1px; }
.w, .e { top: 94px; width: 4px; height: 12px; } .w { left: -1px; } .e { right: -1px; }
.arcgis { left: 393px; top: 140px; width: 256px; height: 200px; background: #fff; }
.arcgis text { font: 700 14.500px "DejaVu Sans", sans-serif; fill: #111; }
.arcgis .esri { font: 600 72px "Open Sans", sans-serif; fill: #e3e3e3; }
.arcgis .a1 { font-size: 20px; font-weight: 400; }
.arcgis .ph { font-weight: 400; fill: #777; }
.arcgis .lm { fill: #3b78ff; }
.mark { position: absolute; border: 3px solid #f00; }
.m1 { left: 162px; top: 104px; width: 128px; height: 46px; }
.filters { width: 33px; background: #fff; border-right: 1px solid #e1dfdd; display: flex; flex-direction: column; align-items: center; }
.fl { margin-top: 16px; }
.fn { margin: 34px 0 0 4px; }
.filters span { writing-mode: vertical-rl; font-size: 14.500px; font-weight: 500; line-height: 18px; margin-top: 11px; letter-spacing: .35px; }
.pages { height: 35px; display: flex; color: #605e5c; line-height: 35px; border-bottom: 1px solid #d2d0ce; white-space: nowrap; letter-spacing: -.08px; }
.arrows { width: 40px; display: flex; align-items: center; gap: 17px; padding-left: 6px; border-right: 1px solid #a8a6a4; }
.pages span { text-align: center; border-right: 1px solid #c8c6c4; padding-left: 1px; }
.p1 { width: 127px; } .p2 { width: 89px; } .p3 { width: 82px; } .p4 { width: 68px; } .p5 { width: 138px; }
.pages .on { background: #fff; color: #484644; border-bottom: 2px solid #f2c811; height: 34px; }
.plus { width: 39px; height: 32px; margin-top: 2px; background: #f2c811; display: flex; align-items: center; justify-content: center; }

.viz { width: 360px; flex: none; position: relative; border-left: 1px solid #e1dfdd; border-right: 1px solid #e1dfdd; display: flex; flex-direction: column; overflow: hidden; }
.phead { height: 50px; flex: none; display: flex; justify-content: space-between; padding: 14px 11px 0 12px; color: #3b3a39; }
.phead h2 { font-size: 14.500px; line-height: 21px; font-weight: 500; letter-spacing: .3px; }
.phead svg { margin-top: 2px; }
.vgrid { display: grid; grid-template-columns: repeat(12, 28px); grid-auto-rows: 24px; padding-left: 4px; height: 73px; flex: none; align-items: center; justify-items: center; border-bottom: 2px solid #e1dfdd; }
.vgrid svg { width: 17px; height: 17px; overflow: visible; }
.vgrid .sel { width: 22px; height: 22px; } .vgrid .dia { width: 19px; height: 19px; }
.n123 { font: 8px "Noto Sans", sans-serif; fill: #0e6cbd; text-anchor: middle; }
.rpy { font: 700 14px "Noto Sans", sans-serif; fill: #2b7fc0; text-anchor: middle; }
.vtabs { height: 44px; flex: none; display: flex; padding-left: 12px; }
.vtabs div { width: 40px; display: flex; justify-content: center; padding-top: 8px; height: 36px; }
.vtabs .on { border-bottom: 4px solid #f2c811; border-radius: 2px; }
.wells { height: 375px; flex: none; overflow: hidden; width: 353px; padding-left: 4px; }
.wlabel { height: 31px; line-height: 26px; padding: 4px 0 0 8px; letter-spacing: -.06px; }
.wlabel:first-child { margin-top: -13px; }
.well { width: 348px; height: 28px; background: #fff; border: 1px dashed #c0bebc; line-height: 25px; padding-left: 10px; letter-spacing: -.06px; }
.two { height: 62px; padding: 3px 2px; } .one { height: 30px; padding: 3px 2px; }
.chip { height: 23px; margin-bottom: 2px; border: 1px solid #c0bebc; border-radius: 2px; background: #eceae9; line-height: 21px; display: flex; align-items: center; gap: 6px; padding: 0 3px 0 4px; }
.chip svg:first-of-type { margin-left: auto; }
.thumb { position: absolute; left: 352px; top: 158px; width: 6px; height: 252px; border-radius: 3px; background: #d2d0ce; }
.m2 { left: 0; top: 169px; width: 353px; height: 81px; }

.fields { flex: 1; position: relative; }
.fields .phead { height: 52px; padding-right: 9px; }
.search { margin: 0 1px 0 4px; height: 30px; background: #fff; border: 1px solid #c0bebc; border-radius: 2px; display: flex; align-items: center; gap: 8px; padding-left: 11px; font-size: 12px; }
.tree { margin-top: 4px; border-top: 1px solid #e1dfdd; padding-top: 9px; letter-spacing: -.05px; }
.row { height: 27px; display: flex; align-items: center; position: relative; }
.row .ch { width: 12px; height: 8px; margin: 0 7px 0 4px; }
.row .up { transform: scaleY(-1); }
.row .tb { width: 13px; height: 12px; color: #fff; margin: 1px 12px 0 0; }
.blue .tb { color: #b7d4ee; }
.row.on { background: #d2d0ce; border-radius: 3px 0 0 3px; }
.row span { padding-bottom: 3px; }
.badge { position: absolute; left: 30px; top: 14px; width: 12px; height: 12px; }
.subs { padding: 4px 0 3px; }
.sub { height: 24px; line-height: 24px; display: flex; align-items: center; padding-left: 32px; gap: 25px; }
.ck { width: 12px; height: 12px; border: 1px solid #797775; border-radius: 2px; display: flex; align-items: center; justify-content: center; }
.ck.on { background: #f2c811; border-color: #f2c811; }
.arrow { position: absolute; left: 4px; top: 219px; }

.status { height: 24px; flex: none; border-top: 1px solid #d2d0ce; line-height: 22px; padding-left: 2px; font-size: 11px; color: #3b3a39; }
.taskbar { height: 37px; flex: none; background: #431c20; color: #fff; display: flex; align-items: center; white-space: nowrap; padding-left: 13px; }
.ic { flex: none; height: 37px; display: flex; align-items: center; padding-top: 2px; }
.i1 { width: 48px; } .i2 { width: 46px; } .i3 { width: 51px; } .i4 { width: 47px; } .i5 { width: 49px; } .i6 { width: 48px; }
.tk { height: 37px; display: flex; align-items: center; gap: 3px; padding-top: 2px; letter-spacing: -.2px; flex: none; }
.k5 { width: 160px; } .k6 { width: 161px; letter-spacing: -.05px; } .k7 { width: 151px; gap: 5px; letter-spacing: -.05px; } .k8 { width: 160px; gap: 6px; padding-left: 12px; background: #6d474b; letter-spacing: 0; }
.tray { margin-left: auto; display: flex; align-items: center; gap: 8px; padding: 1px 21px 0 0; }
.mic { margin: 0 0 0 4px; }
.clock { text-align: center; line-height: 18px; width: 62px; letter-spacing: -.1px; margin: 0 8px 0 0; font-size: 11px; }
```
